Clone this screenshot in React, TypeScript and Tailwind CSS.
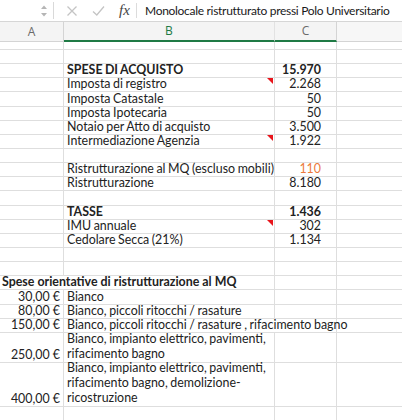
import React from 'react';

type Row = {
  h: number;
  a?: React.ReactNode;
  b?: React.ReactNode;
  c?: React.ReactNode;
  bold?: boolean;
  note?: boolean;
  aOver?: boolean;
  bOver?: boolean;
  wrap?: boolean;
  cClass?: string;
};

const R = 14.15;

const rows: Row[] = [
  { h: 8 },
  { h: R },
  { h: R, b: 'SPESE DI ACQUISTO', c: '15.970', bold: true },
  { h: R, b: 'Imposta di registro', c: '2.268', note: true },
  { h: R, b: 'Imposta Catastale', c: '50' },
  { h: R, b: 'Imposta Ipotecaria', c: '50' },
  { h: R, b: 'Notaio per Atto di acquisto', c: '3.500' },
  { h: R, b: 'Intermediazione Agenzia', c: '1.922', note: true },
  { h: R },
  { h: R, b: 'Ristrutturazione al MQ (escluso mobili)', c: '110', cClass: 'text-[#ec7a3c]' },
  { h: R, b: 'Ristrutturazione', c: '8.180' },
  { h: R },
  { h: R, b: 'TASSE', c: '1.436', bold: true },
  { h: R, b: 'IMU annuale', c: '302', note: true },
  { h: R, b: 'Cedolare Secca (21%)', c: '1.134' },
  { h: R },
  { h: R },
  { h: R, a: 'Spese orientative di ristrutturazione al MQ', aOver: true, bold: true },
  { h: R, a: '30,00 €', b: 'Bianco' },
  { h: R, a: '80,00 €', b: 'Bianco, piccoli ritocchi / rasature' },
  { h: R, a: '150,00 €', b: 'Bianco, piccoli ritocchi / rasature , rifacimento bagno', bOver: true },
  { h: 30, a: '250,00 €', b: 'Bianco, impianto elettrico, pavimenti, rifacimento bagno', wrap: true },
  { h: 44, a: '400,00 €', b: 'Bianco, impianto elettrico, pavimenti, rifacimento bagno, demolizione-ricostruzione', wrap: true },
  { h: R },
];

const grid = 'border-[#dedede]';
const cellFont = { fontFamily: 'Lato, "Noto Sans", sans-serif' };

function FormulaBar() {
  return (
    <div className="flex h-[22px] items-center border-b border-[#d6d6d6] bg-white">
      <div className="flex w-[53px] shrink-0 items-center justify-end pr-[5px]">
        <svg width="8" height="14" viewBox="0 0 8 14">
          <path d="M1 5 L4 1.5 L7 5 Z" fill="#b5b5b5" />
          <path d="M1 9 L4 12.5 L7 9 Z" fill="#b5b5b5" />
        </svg>
      </div>
      <div className="h-[17px] w-px shrink-0 bg-[#d9d9d9]" />
      <div className="flex w-[82px] shrink-0 items-center pl-[12px]">
        <svg width="12" height="12" viewBox="0 0 12 12" className="mr-[14px]">
          <path d="M1.5 1.5 L10.5 10.5 M10.5 1.5 L1.5 10.5" stroke="#c4c4c4" strokeWidth="1.3" />
        </svg>
        <svg width="13" height="12" viewBox="0 0 13 12" className="mr-[14px]">
          <path d="M1 6.5 L4.8 10 L12 1.5" stroke="#c4c4c4" strokeWidth="1.3" fill="none" />
        </svg>
        <span className="text-[15px] italic leading-none text-[#444]" style={{ fontFamily: '"Liberation Serif", serif' }}>
          fx
        </span>
      </div>
      <div className="h-[15px] w-px shrink-0 bg-[#dcdcdc]" />
      <div
        className="whitespace-nowrap pl-[8px] text-[12px] leading-none tracking-[-0.3px] text-[#1a1a1a]"
        style={{ fontFamily: 'Lato, "Noto Sans", sans-serif' }}
      >
        Monolocale ristrutturato pressi Polo Universitario
      </div>
    </div>
  );
}

function ColumnHeader() {
  return (
    <div className="flex h-[20px] bg-[#f4f4f4] text-[12px] leading-none" style={{ fontFamily: '"Open Sans", sans-serif' }}>
      <div className="flex w-[64px] items-center justify-center border-b border-r border-[#d4d4d4] text-[#6a6a6a]">A</div>
      <div className="flex w-[211px] items-center justify-center border-b-2 border-r border-b-[#1f7a45] border-r-[#e2e2e2] text-[#1f7a45]">
        B
      </div>
      <div className="flex w-[62px] items-center justify-center border-b-2 border-r border-b-[#1f7a45] border-r-[#d4d4d4] text-[#6a6a6a]">
        C
      </div>
      <div className="flex-1 border-b border-[#d4d4d4] bg-[#f7f7f7]" />
    </div>
  );
}

function SheetRow({ row }: { row: Row }) {
  const weight = row.bold ? 'font-bold' : 'font-normal';
  return (
    <div className="flex text-[12.4px] text-[#222]" style={{ height: row.h, ...cellFont }}>
      <div
        className={`relative flex w-[64px] shrink-0 items-end border-b ${grid} ${row.aOver ? 'z-10' : 'border-r'} ${
          row.aOver ? 'justify-start pl-[2px]' : 'justify-end pr-[3px]'
        }`}
      >
        {row.a && <span className={`whitespace-nowrap leading-[14px] ${weight}`}>{row.a}</span>}
      </div>
      <div
        className={`relative flex w-[211px] shrink-0 items-end border-b ${grid} ${row.bOver ? 'z-10' : 'border-r'} pl-[3px]`}
        style={{ wordSpacing: '-0.6px' }}
      >
        {row.b &&
          (row.wrap ? (
            <span className="w-[206px] pb-[1px] leading-[15px]">{row.b}</span>
          ) : (
            <span className={`whitespace-nowrap leading-[14px] ${row.a ? 'font-normal' : weight}`}>{row.b}</span>
          ))}
        {row.note && (
          <svg width="6" height="6" viewBox="0 0 6 6" className="absolute right-[1px] top-0">
            <path d="M0 0 L6 0 L6 6 Z" fill="#e8141b" />
          </svg>
        )}
      </div>
      <div className={`flex w-[62px] shrink-0 items-end justify-end border-b border-r ${grid} pr-[15px]`}>
        {row.c && <span className={`whitespace-nowrap leading-[14px] ${weight} ${row.cClass ?? ''}`}>{row.c}</span>}
      </div>
      <div className={`flex-1 border-b ${grid}`} />
    </div>
  );
}

export default function App() {
  return (
    <div className="h-[420px] w-[402px] overflow-hidden bg-white">
      <FormulaBar />
      <ColumnHeader />
      {rows.map((row, i) => (
        <SheetRow key={i} row={row} />
      ))}
    </div>
  );
}
